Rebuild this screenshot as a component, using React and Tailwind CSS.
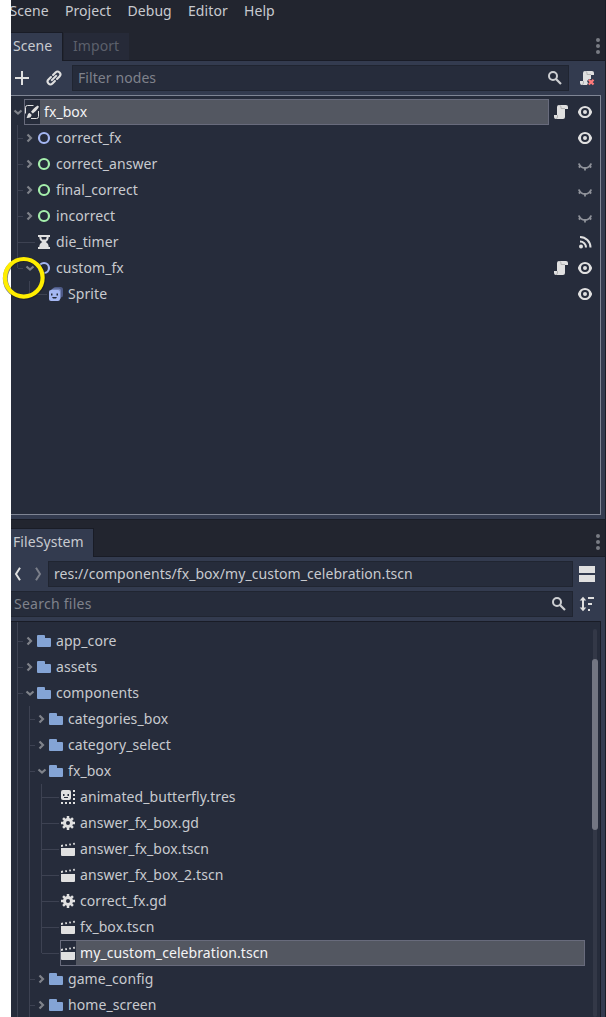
import React from "react";

const LIGHT = "#e0e0e0";

function Svg({ children, className = "" }) {
  return (
    <svg width="16" height="16" viewBox="0 0 16 16" fill="none" className={`block shrink-0 ${className}`}>
      {children}
    </svg>
  );
}

const Plus = () => (
  <Svg><path d="M8 1v14M1 8h14" stroke={LIGHT} strokeWidth="2" /></Svg>
);

const Link = () => (
  <Svg>
    <g transform="rotate(-45 8 8)" stroke={LIGHT} strokeWidth="2.100" strokeLinecap="round">
      <path d="M6.500 5.200H3a2.800 2.800 0 0 0 0 5.600h3.500M9.500 5.200H13a2.800 2.800 0 0 1 0 5.600H9.500M5 8h6" />
    </g>
  </Svg>
);

const Search = () => (
  <Svg>
    <circle cx="6" cy="6" r="4" stroke="#cdcfd2" strokeWidth="2" />
    <path d="M9 9l5 5" stroke="#cdcfd2" strokeWidth="2.200" />
  </Svg>
);

const SCROLL = "M6 1a2 2 0 0 0-2 2v8H1v2a2 2 0 0 0 2 2h7a2 2 0 0 0 2-2V5h3V3a2 2 0 0 0-2-2z";

const Script = () => (
  <Svg>
    <path d={SCROLL} fill={LIGHT} />
    <path d="M6.500 1.500a1.500 1.500 0 0 1 1.500 1.500v1.500h4M4.500 11v2a1.500 1.500 0 0 1-1.500 1.500" stroke="#b4b4b4" />
  </Svg>
);

const ScriptRemove = () => (
  <Svg>
    <path d="M6 1a2 2 0 0 0-2 2v8H1v2a2 2 0 0 0 2 2h5l1-2-1-2 2-2h2V5h3V3a2 2 0 0 0-2-2z" fill={LIGHT} />
    <path d="M6.500 1.500a1.500 1.500 0 0 1 1.500 1.500v1.500h4M4.500 11v2a1.500 1.500 0 0 1-1.500 1.500" stroke="#b4b4b4" />
    <path d="M9.800 9.800l4.700 4.700M14.500 9.800l-4.700 4.700" stroke="#ff7a7a" strokeWidth="2.200" />
  </Svg>
);

const Eye = () => (
  <Svg>
    <path fillRule="evenodd" fill={LIGHT} d="M8 2C4.600 2 2.200 4.400 1 7.600v.8C2.200 11.600 4.600 14 8 14s5.800-2.400 7-5.600v-.8C13.800 4.400 11.400 2 8 2zm0 2a4 4 0 1 1 0 8 4 4 0 0 1 0-8z" />
    <circle cx="8" cy="8" r="2" fill={LIGHT} />
  </Svg>
);

const EyeClosed = () => (
  <Svg>
    <path d="M1.800 7.500C3 10.500 5.200 12 8 12s5-1.500 6.200-4.500" stroke="#8f929a" strokeWidth="2" />
    <path d="M3.500 9.800l-1.700 1.700M12.500 9.800l1.700 1.700M8 11.500v3" stroke="#8f929a" strokeWidth="1.800" />
  </Svg>
);

const Signal = () => (
  <Svg>
    <circle cx="4" cy="12.500" r="2" fill={LIGHT} />
    <path d="M3 7.500a6 6 0 0 1 6 6M3 3a10.500 10.500 0 0 1 10.500 10.500" stroke={LIGHT} strokeWidth="2" />
  </Svg>
);

const Ring = ({ color }) => (
  <Svg><circle cx="8" cy="8" r="5" stroke={color} strokeWidth="2.200" /></Svg>
);

const Timer = () => (
  <Svg>
    <path fillRule="evenodd" fill={LIGHT} d="M2 1v2h1.300c0 2.300 1 4 2.900 5-1.900 1-2.900 2.700-2.900 5H2v2h12v-2h-1.300c0-2.300-1-4-2.900-5 1.900-1 2.900-2.700 2.900-5H14V1zm3.300 2h5.400c-.1 1-.4 1.700-.9 2.400H6.200C5.700 4.700 5.400 4 5.300 3z" />
  </Svg>
);

const Viewport = () => (
  <Svg>
    <path d="M1.500 9.500V3.500a2 2 0 0 1 2-2h6M14.500 7v5.500a2 2 0 0 1-2 2H7" stroke={LIGHT} />
    <path d="M13.800 1.600l1.200 1.200c-1.600 2.600-3.600 4.900-6.200 6.800L7 7.800C8.900 5.400 11 3.300 13.800 1.600z" fill={LIGHT} />
    <path d="M5.700 9l1.900 1.800c.1 2.200-1.900 3.400-5.100 3.200 1.200-1.100.6-4.600 3.200-5z" fill={LIGHT} />
  </Svg>
);

const Sprite = () => (
  <Svg>
    <rect x="5" y="1" width="10" height="10.500" rx="2.500" fill="#4d5a87" />
    <rect x="3" y="2.500" width="10" height="11" rx="2.500" fill="#7484b8" />
    <rect x="1" y="4" width="11" height="11" rx="2" fill="#a5b7f3" />
    <path d="M3 7.500h1.500v2H3zM8.500 7.500H10v2H8.500zM4 11h5l-1 1.500H5z" fill="#262c3b" />
  </Svg>
);

const Folder = () => (
  <Svg><path d="M2 2a1 1 0 0 0-1 1v10a1 1 0 0 0 1 1h12a1 1 0 0 0 1-1V6a1 1 0 0 0-1-1H9V3a1 1 0 0 0-1-1z" fill="#84a4d5" /></Svg>
);

const Frames = () => (
  <Svg>
    <rect x="1" y="1" width="10" height="10" rx="2" fill={LIGHT} />
    <path d="M3 5h1.500v2H3zM7.500 5H9v2H7.500zM4 8h4v1H4z" fill="#262c3b" />
    <path d="M13 1h2v2h-2zM13 5h2v2h-2zM13 9h2v2h-2zM1 13h2v2H1zM5 13h2v2H5zM9 13h2v2H9zM13 13h2v2h-2z" fill={LIGHT} />
  </Svg>
);

const Gear = () => (
  <Svg>
    <path d="M8 1v14M1 8h14M3.050 3.050l9.900 9.900M12.950 3.050l-9.900 9.900" stroke={LIGHT} strokeWidth="2.500" />
    <circle cx="8" cy="8" r="5" fill={LIGHT} />
    <circle cx="8" cy="8" r="2" fill="#262c3b" />
  </Svg>
);

const Clapper = () => (
  <Svg>
    <path d="M1 7h14v7a1 1 0 0 1-1 1H2a1 1 0 0 1-1-1z" fill={LIGHT} />
    <path d="M1 4l1.800-.4.4 2L1 6zM5 3.400l1.600-.3.500 1.900-1.600.3zM9 2.700l1.600-.3.500 1.900-1.600.3zM13 2l1.700-.3.300 1.900-1.500.3z" fill={LIGHT} />
  </Svg>
);

const Sort = () => (
  <Svg>
    <path d="M4 4v8" stroke={LIGHT} strokeWidth="2" />
    <path d="M4 .7l3.300 3.800H.7zM4 15.300l3.300-3.800H.7z" fill={LIGHT} />
    <path d="M9 1h6v2H9zM9 7h4v2H9zM9 13h2v2H9z" fill={LIGHT} />
  </Svg>
);

const Split = () => (
  <Svg><path d="M0 0h16v7H0zM0 9h16v7H0z" fill={LIGHT} /></Svg>
);

const Dots = () => (
  <Svg>
    <circle cx="8" cy="2" r="2" fill="#797c84" />
    <circle cx="8" cy="8" r="2" fill="#797c84" />
    <circle cx="8" cy="14" r="2" fill="#797c84" />
  </Svg>
);

const Chevron = ({ flip, color }) => (
  <Svg>
    <path d={flip ? "M6 1.700l4 6.300-4 6.300" : "M10 1.700L6 8l4 6.300"} stroke={color} strokeWidth="2" />
  </Svg>
);

/* One indentation column: "line" passes by, "tee" joins, "end" closes, "none" is blank. */
function Guide({ kind }) {
  return (
    <svg width="12" height="26" viewBox="0 0 12 26" className="block shrink-0" fill="#3d4252">
      {(kind === "line" || kind === "tee") && <rect x="6" y="0" width="1" height="26" />}
      {kind === "end" && <rect x="6" y="0" width="1" height="13" />}
      {(kind === "tee" || kind === "end") && <rect x="7" y="13" width="5" height="1" />}
    </svg>
  );
}

function Arrow({ state }) {
  return (
    <svg width="13" height="26" viewBox="0 0 13 26" className="block shrink-0" fill="none">
      {state === "open" && <path d="M3.500 11.500l3.500 3 3.500-3" stroke="#7f828a" strokeWidth="2.200" />}
      {state === "closed" && <path d="M4.500 9.500L8 13l-3.500 3.500" stroke="#7f828a" strokeWidth="2.200" />}
      {state === "leaf" && <rect x="0" y="13" width="12" height="1" fill="#3d4252" />}
    </svg>
  );
}

function Row({ guides = [], arrow, icon, label, selected, actions }) {
  return (
    <div className="flex h-[26px] w-full shrink-0 items-center">
      {guides.map((g, i) => <Guide key={i} kind={g} />)}
      <Arrow state={arrow} />
      {selected ? (
        <div className="flex h-[26px] w-[525px] shrink-0 items-center border border-[#686b7c] bg-[#535761] text-[#f4f4f5]">
          <div className="flex h-full w-[15px] items-center overflow-hidden bg-[#262c3b]">
            <div className="-ml-px">{icon}</div>
          </div>
          <span className="pl-1">{label}</span>
        </div>
      ) : (
        <div className="flex items-center gap-1">
          {icon}
          <span>{label}</span>
        </div>
      )}
      {actions && <div className="ml-auto flex shrink-0 gap-2 pr-[7px]">{actions}</div>}
    </div>
  );
}

function Field({ children, className = "", search, muted }) {
  return (
    <div className={`flex h-[26px] items-center justify-between border border-[#202531] bg-[#262c3b] ${muted ? "text-[#7f828b]" : ""} ${className}`}>
      <span>{children}</span>
      {search && <Search />}
    </div>
  );
}

const BLUE = "#a5b7f3";
const GREEN = "#a5efac";

const nodes = [
  { arrow: "open", icon: <Viewport />, label: "fx_box", selected: true, actions: <><Script /><Eye /></> },
  { guides: ["tee"], arrow: "closed", icon: <Ring color={BLUE} />, label: "correct_fx", actions: <Eye /> },
  { guides: ["tee"], arrow: "closed", icon: <Ring color={GREEN} />, label: "correct_answer", actions: <EyeClosed /> },
  { guides: ["tee"], arrow: "closed", icon: <Ring color={GREEN} />, label: "final_correct", actions: <EyeClosed /> },
  { guides: ["tee"], arrow: "closed", icon: <Ring color={GREEN} />, label: "incorrect", actions: <EyeClosed /> },
  { guides: ["tee"], arrow: "leaf", icon: <Timer />, label: "die_timer", actions: <Signal /> },
  { guides: ["end"], arrow: "open", icon: <Ring color={BLUE} />, label: "custom_fx", actions: <><Script /><Eye /></> },
  { guides: ["none", "end"], arrow: "leaf", icon: <Sprite />, label: "Sprite", actions: <Eye /> },
];

const files = [
  { guides: ["tee"], arrow: "closed", icon: <Folder />, label: "app_core" },
  { guides: ["tee"], arrow: "closed", icon: <Folder />, label: "assets" },
  { guides: ["tee"], arrow: "open", icon: <Folder />, label: "components" },
  { guides: ["line", "tee"], arrow: "closed", icon: <Folder />, label: "categories_box" },
  { guides: ["line", "tee"], arrow: "closed", icon: <Folder />, label: "category_select" },
  { guides: ["line", "tee"], arrow: "open", icon: <Folder />, label: "fx_box" },
  { guides: ["line", "line", "tee"], arrow: "leaf", icon: <Frames />, label: "animated_butterfly.tres" },
  { guides: ["line", "line", "tee"], arrow: "leaf", icon: <Gear />, label: "answer_fx_box.gd" },
  { guides: ["line", "line", "tee"], arrow: "leaf", icon: <Clapper />, label: "answer_fx_box.tscn" },
  { guides: ["line", "line", "tee"], arrow: "leaf", icon: <Clapper />, label: "answer_fx_box_2.tscn" },
  { guides: ["line", "line", "tee"], arrow: "leaf", icon: <Gear />, label: "correct_fx.gd" },
  { guides: ["line", "line", "tee"], arrow: "leaf", icon: <Clapper />, label: "fx_box.tscn" },
  { guides: ["line", "line", "end"], arrow: "leaf", icon: <Clapper />, label: "my_custom_celebration.tscn", selected: true },
  { guides: ["line", "tee"], arrow: "closed", icon: <Folder />, label: "game_config" },
  { guides: ["line", "tee"], arrow: "closed", icon: <Folder />, label: "home_screen" },
];

export default function App() {
  return (
    <div className="relative h-[1017px] w-[606px] overflow-hidden bg-white pl-[11px] font-['Noto_Sans',sans-serif] text-[14px] leading-[20px] tracking-[0.08px] [font-variant-ligatures:none] text-[#c8cacf]">
      <div className="flex h-full w-[595px] flex-col overflow-hidden border-r border-[#191c26] bg-[#22252f]">
        <nav className="-ml-[1.500px] flex h-[32px] shrink-0 gap-[16.200px] pt-px">
          {["Scene", "Project", "Debug", "Editor", "Help"].map((m) => <span key={m}>{m}</span>)}
        </nav>

        <div className="flex h-[29px] shrink-0">
          <div className="flex w-[52px] items-center border-t border-r border-[#191c26] bg-[#333b4f] pb-[2px] pl-[2px]">Scene</div>
          <div className="flex grow border-b border-[#191c26] pt-px pl-px">
            <div className="flex w-[65px] items-center bg-[#262a38] pb-[2px] pl-[9px] text-[#5c606b]">Import</div>
            <div className="mt-[5px] -mr-px ml-auto"><Dots /></div>
          </div>
        </div>

        <section className="flex h-[458px] shrink-0 flex-col bg-[#333b4f] pt-1">
          <div className="flex h-[30px] shrink-0 items-start">
            <div className="mt-[5px] ml-[3px]"><Plus /></div>
            <div className="mt-[5px] ml-4"><Link /></div>
            <Field className="ml-[10px] w-[497px] pr-[5px] pl-[5px]" search muted>Filter nodes</Field>
            <div className="mt-[5px] ml-[10px]"><ScriptRemove /></div>
          </div>
          <div className="flex h-[420px] w-[590px] shrink-0 flex-col border-t border-r border-b border-[#7f8594] bg-[#262c3b] pt-[3px]">
            {nodes.map((n) => <Row key={n.label} {...n} />)}
          </div>
        </section>

        <div className="flex h-[38px] shrink-0 border-t border-[#191c26] pt-[8px]">
          <div className="flex w-[83px] items-center border-t border-r border-[#191c26] bg-[#333b4f] pb-[3px] pl-[2px]">FileSystem</div>
          <div className="flex grow border-b border-[#191c26]">
            <div className="mt-[6px] -mr-px ml-auto"><Dots /></div>
          </div>
        </div>

        <section className="flex grow flex-col bg-[#333b4f] pt-1">
          <div className="flex h-[30px] shrink-0">
            <div className="mt-[5px] -ml-px"><Chevron color="#e0e0e0" /></div>
            <div className="mt-[5px] ml-1"><Chevron flip color="#7b7f8a" /></div>
            <Field className="ml-[2px] w-[525px] pl-[5px] tracking-[0.06px]">res://components/fx_box/my_custom_celebration.tscn</Field>
            <div className="mt-[5px] ml-[6px]"><Split /></div>
          </div>
          <div className="flex h-[30px] shrink-0">
            <Field className="w-[562px] border-l-0 pr-[5px] pl-[3px] tracking-[0.25px]" search muted>Search files</Field>
            <div className="mt-[5px] ml-[6px]"><Sort /></div>
          </div>
          <div className="flex h-[420px] w-[590px] shrink-0 border-t border-r border-[#191c26] bg-[#262c3b]">
            <div className="flex min-w-0 grow flex-col">
              <div className="h-[6px] shrink-0"><div className="ml-[6px] h-full w-px bg-[#3d4252]" /></div>
              {files.map((f) => <Row key={f.label} {...f} />)}
            </div>
            <div className="mt-[7px] mr-[2px] flex h-[388px] w-[6px] shrink-0 justify-center">
              <div className="flex w-1 justify-center rounded-full bg-[#333847]">
                <div className="mt-[30px] h-[171px] w-[6px] shrink-0 rounded-full bg-[#737682]" />
              </div>
            </div>
          </div>
        </section>
      </div>

      <svg className="absolute top-[254px] left-0" width="48" height="48" viewBox="0 0 48 48" fill="none">
        <circle cx="24.300" cy="24.400" r="19" stroke="#171a24" strokeOpacity="0.550" strokeWidth="5" />
        <circle cx="23.800" cy="23.800" r="18.800" stroke="#ffee00" strokeWidth="4.200" />
      </svg>
    </div>
  );
}
